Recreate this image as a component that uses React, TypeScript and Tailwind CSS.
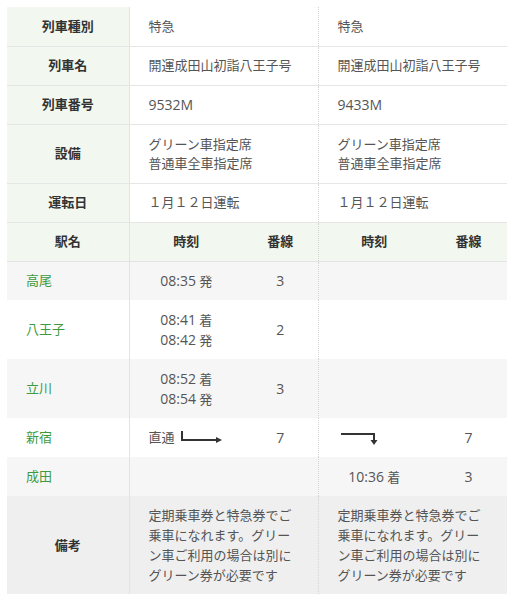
import React from 'react';

const headCell = 'bg-[#f2f8ef] text-[#333] font-bold text-center border-r border-[#e3e3e3]';
const dataCell = 'text-[#555] pl-[19px]';
const rowLine = 'border-b border-[#e6e6e6]';
const dotted = 'border-l border-dotted border-[#d6d6d6]';

// latin digits in the reference render a bit larger than the kana
const N = ({ children }: { children: React.ReactNode }) => <span className="text-[14px]">{children}</span>;

const infoRows: { label: string; a: React.ReactNode[]; b: React.ReactNode[] }[] = [
  { label: '列車種別', a: ['特急'], b: ['特急'] },
  { label: '列車名', a: ['開運成田山初詣八王子号'], b: ['開運成田山初詣八王子号'] },
  { label: '列車番号', a: [<N>9532M</N>], b: [<N>9433M</N>] },
  { label: '設備', a: ['グリーン車指定席', '普通車全車指定席'], b: ['グリーン車指定席', '普通車全車指定席'] },
  { label: '運転日', a: ['１月１２日運転'], b: ['１月１２日運転'] },
];

const note = ['定期乗車券と特急券でご', '乗車になれます。グリー', 'ン車ご利用の場合は別に', 'グリーン券が必要です'];

const ThroughRight = () => (
  <svg width="42" height="12" viewBox="0 0 42 12" className="inline-block ml-[6px] align-[-1px]">
    <path d="M1 0 V9 H36" stroke="#333" strokeWidth="2" fill="none" />
    <polygon points="35,6 41,9 35,12" fill="#333" />
  </svg>
);

const ThroughDown = () => (
  <svg width="38" height="14" viewBox="0 0 38 14" className="inline-block align-[-4px]">
    <path d="M0 2 H33 V9" stroke="#333" strokeWidth="2" fill="none" />
    <polygon points="29.5,8 36.5,8 33,13" fill="#333" />
  </svg>
);

const Lines = ({ items }: { items: React.ReactNode[] }) => (
  <>
    {items.map((t, i) => (
      <div key={i}>{t}</div>
    ))}
  </>
);

const Time = ({ t, kind }: { t: string; kind: string }) => (
  <div>
    <N>{t}</N> {kind}
  </div>
);

export default function App() {
  const stations = [
    { name: '高尾', bg: 'bg-[#f6f6f6]', t1: [['08:35', '発']], p1: '3' },
    { name: '八王子', bg: 'bg-white', t1: [['08:41', '着'], ['08:42', '発']], p1: '2' },
    { name: '立川', bg: 'bg-[#f6f6f6]', t1: [['08:52', '着'], ['08:54', '発']], p1: '3' },
  ];

  return (
    <div className="p-[7px] bg-white" style={{ fontFamily: '"Open Sans", "Noto Sans CJK JP", sans-serif' }}>
      <table className="table-fixed border-collapse w-[500px] text-[13px] leading-[19px]">
        <colgroup>
          <col className="w-[122px]" />
          <col className="w-[114px]" />
          <col className="w-[75px]" />
          <col className="w-[112px]" />
          <col className="w-[77px]" />
        </colgroup>
        <tbody>
          {infoRows.map(r => (
            <tr key={r.label} className={`${rowLine} ${r.a.length > 1 ? 'h-[59px]' : 'h-[39px]'}`}>
              <th className={headCell}>{r.label}</th>
              <td colSpan={2} className={dataCell}><Lines items={r.a} /></td>
              <td colSpan={2} className={`${dataCell} ${dotted}`}><Lines items={r.b} /></td>
            </tr>
          ))}

          <tr className="h-[39px] bg-[#f2f8ef] text-[#333] font-bold border-b border-[#e3e3e3]">
            <th className="text-center border-r border-[#e3e3e3]">駅名</th>
            <th className="text-center">時刻</th>
            <th className="text-center">番線</th>
            <th className={`text-center ${dotted}`}>時刻</th>
            <th className="text-center">番線</th>
          </tr>

          {stations.map(s => (
            <tr key={s.name} className={`${s.bg} ${s.t1.length > 1 ? 'h-[59px]' : 'h-[39px]'} text-[#555]`}>
              <td className="pl-[19px] text-[#3d9a3d] border-r border-[#e3e3e3]">{s.name}</td>
              <td className="text-center">
                {s.t1.map(([t, k]) => <Time key={t} t={t} kind={k} />)}
              </td>
              <td className="text-center"><N>{s.p1}</N></td>
              <td className={dotted}></td>
              <td></td>
            </tr>
          ))}

          <tr className="bg-white h-[39px] text-[#555]">
            <td className="pl-[19px] text-[#3d9a3d] border-r border-[#e3e3e3]">新宿</td>
            <td className="pl-[19px] whitespace-nowrap">直通<ThroughRight /></td>
            <td className="text-center"><N>7</N></td>
            <td className={`pl-[22px] ${dotted}`}><ThroughDown /></td>
            <td className="text-center"><N>7</N></td>
          </tr>

          <tr className="bg-[#f6f6f6] h-[39px] text-[#555]">
            <td className="pl-[19px] text-[#3d9a3d] border-r border-[#e3e3e3]">成田</td>
            <td></td>
            <td></td>
            <td className={`text-center ${dotted}`}><Time t="10:36" kind="着" /></td>
            <td className="text-center"><N>3</N></td>
          </tr>

          <tr className="bg-[#efefef] h-[98px] text-[#555] leading-[20px]">
            <th className="text-center text-[#333] font-bold border-r border-[#e3e3e3]">備考</th>
            <td colSpan={2} className="pl-[19px]"><Lines items={note} /></td>
            <td colSpan={2} className={`pl-[19px] ${dotted}`}><Lines items={note} /></td>
          </tr>
        </tbody>
      </table>
    </div>
  );
}
